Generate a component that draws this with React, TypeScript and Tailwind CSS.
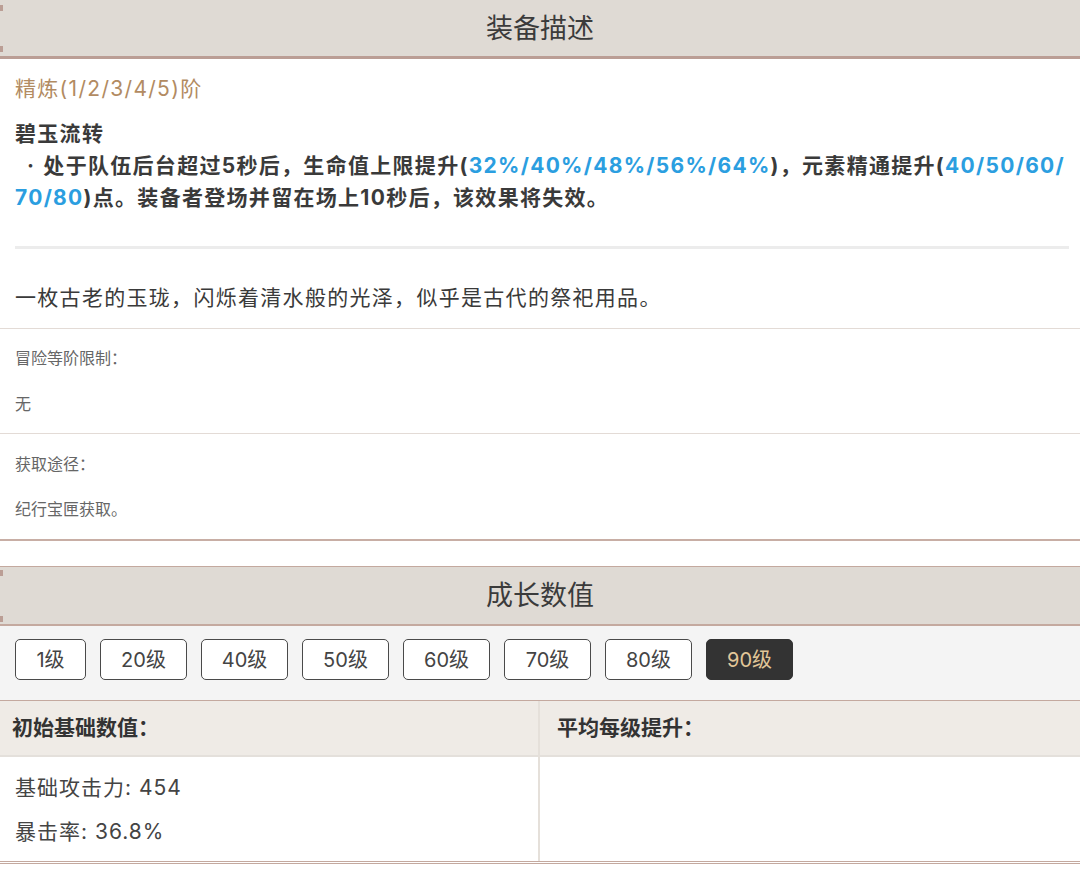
import React from "react";

const font = "font-['Inter','Noto_Sans_CJK_SC',sans-serif]";

const levels = ["1级", "20级", "40级", "50级", "60级", "70级", "80级", "90级"];

function Corner({ pos }: { pos: string }) {
  return <div className={`absolute left-0 h-[6px] w-[3px] bg-[#bb9e95] ${pos}`} />;
}

export default function App() {
  const blue = "text-[#2b9ee0]";
  return (
    <div className={`w-[1080px] h-[871px] bg-white overflow-hidden ${font}`}>
      {/* Header 1 */}
      <div className="relative flex h-[59px] items-center justify-center bg-[#dfdad4] border-b-[3px] border-[#bb9e95]">
        <Corner pos="top-[5px]" />
        <Corner pos="bottom-[4px]" />
        <span className="text-[27px] leading-none text-[#3b3b3b]">装备描述</span>
      </div>

      <div className="px-[15px] pt-[14px] tracking-[1.3px]">
        <div className="text-[21px] leading-[32px] text-[#b28b62]">精炼(1/2/3/4/5)阶</div>
        <div className="mt-[13px] text-[21px] leading-[32px] font-bold text-[#3a3a3a]">碧玉流转</div>
        <div className="text-[21px] leading-[32px] font-bold text-[#3a3a3a] whitespace-nowrap">
          <div>
            <span className="pl-[12px] pr-[8px]">·</span>
            <span>处于队伍后台超过5秒后，生命值上限提升(</span>
            <span className={blue}>32%/40%/48%/56%/64%</span>
            <span>)，元素精通提升(</span>
            <span className={blue}>40/50/60/</span>
          </div>
          <div>
            <span className={blue}>70/80</span>
            <span>)点。装备者登场并留在场上10秒后，该效果将失效。</span>
          </div>
        </div>
        <div className="mt-[32px] h-[3px] w-[1054px] bg-[#ececec]" />
        <div className="mt-[33px] pb-[14px] text-[21px] leading-[32px] text-[#3a3a3a]">
          一枚古老的玉珑，闪烁着清水般的光泽，似乎是古代的祭祀用品。
        </div>
      </div>

      <div className="border-t border-[#e3dbd6] px-[15px] pt-[17px] pb-[17px] text-[16px] text-[#666]">
        <div className="leading-[24px]">冒险等阶限制：</div>
        <div className="mt-[22px] leading-[24px]">无</div>
      </div>
      <div className="border-t border-[#e3dbd6] border-b-2 border-b-[#c8aea5] px-[15px] pt-[18px] pb-[18px] text-[16px] text-[#666]">
        <div className="leading-[24px]">获取途径：</div>
        <div className="mt-[21px] leading-[24px]">纪行宝匣获取。</div>
      </div>

      <div className="h-[25px]" />

      {/* Header 2 */}
      <div className="border-t border-[#c4a99f]">
        <div className="relative flex h-[59px] items-center justify-center bg-[#dfdad4] border-b-2 border-[#c4a99f]">
          <Corner pos="top-[3px]" />
          <Corner pos="bottom-[2px]" />
          <span className="text-[27px] leading-none text-[#3b3b3b]">成长数值</span>
        </div>
      </div>

      <div className="flex gap-[14px] bg-[#f4f4f4] px-[15px] pt-[13px] pb-[20px] border-b border-[#c4a99f]">
        {levels.map((l, i) => {
          const active = i === levels.length - 1;
          return (
            <div
              key={l}
              className={`flex h-[41px] items-center justify-center rounded-[5px] border-[1.5px] text-[20px] ${
                i === 0 ? "w-[71px]" : "w-[87px]"
              } ${
                active
                  ? "bg-[#333333] border-[#333333] text-[#e2c799]"
                  : "bg-white border-[#4a4a4a] text-[#444]"
              }`}
            >
              {l}
            </div>
          );
        })}
      </div>

      <div className="flex border-b-[3px] border-double border-[#c4a99f]">
        <div className="w-[540px] border-r-2 border-[#e5e0da]">
          <div className="flex h-[56px] items-center bg-[#efebe6] border-b-2 border-[#e4e0db] pl-[12px] text-[21px] font-bold text-[#333]">
            初始基础数值：
          </div>
          <div className="pt-[15px] pb-[13px] px-[15px] text-[21px] tracking-[1px] text-[#444]">
            <div className="leading-[32px]">基础攻击力: 454</div>
            <div className="mt-[12px] leading-[32px]">暴击率: 36.8%</div>
          </div>
        </div>
        <div className="flex-1">
          <div className="flex h-[56px] items-center bg-[#efebe6] border-b-2 border-[#e4e0db] pl-[17px] text-[21px] font-bold text-[#333]">
            平均每级提升：
          </div>
        </div>
      </div>
    </div>
  );
}
